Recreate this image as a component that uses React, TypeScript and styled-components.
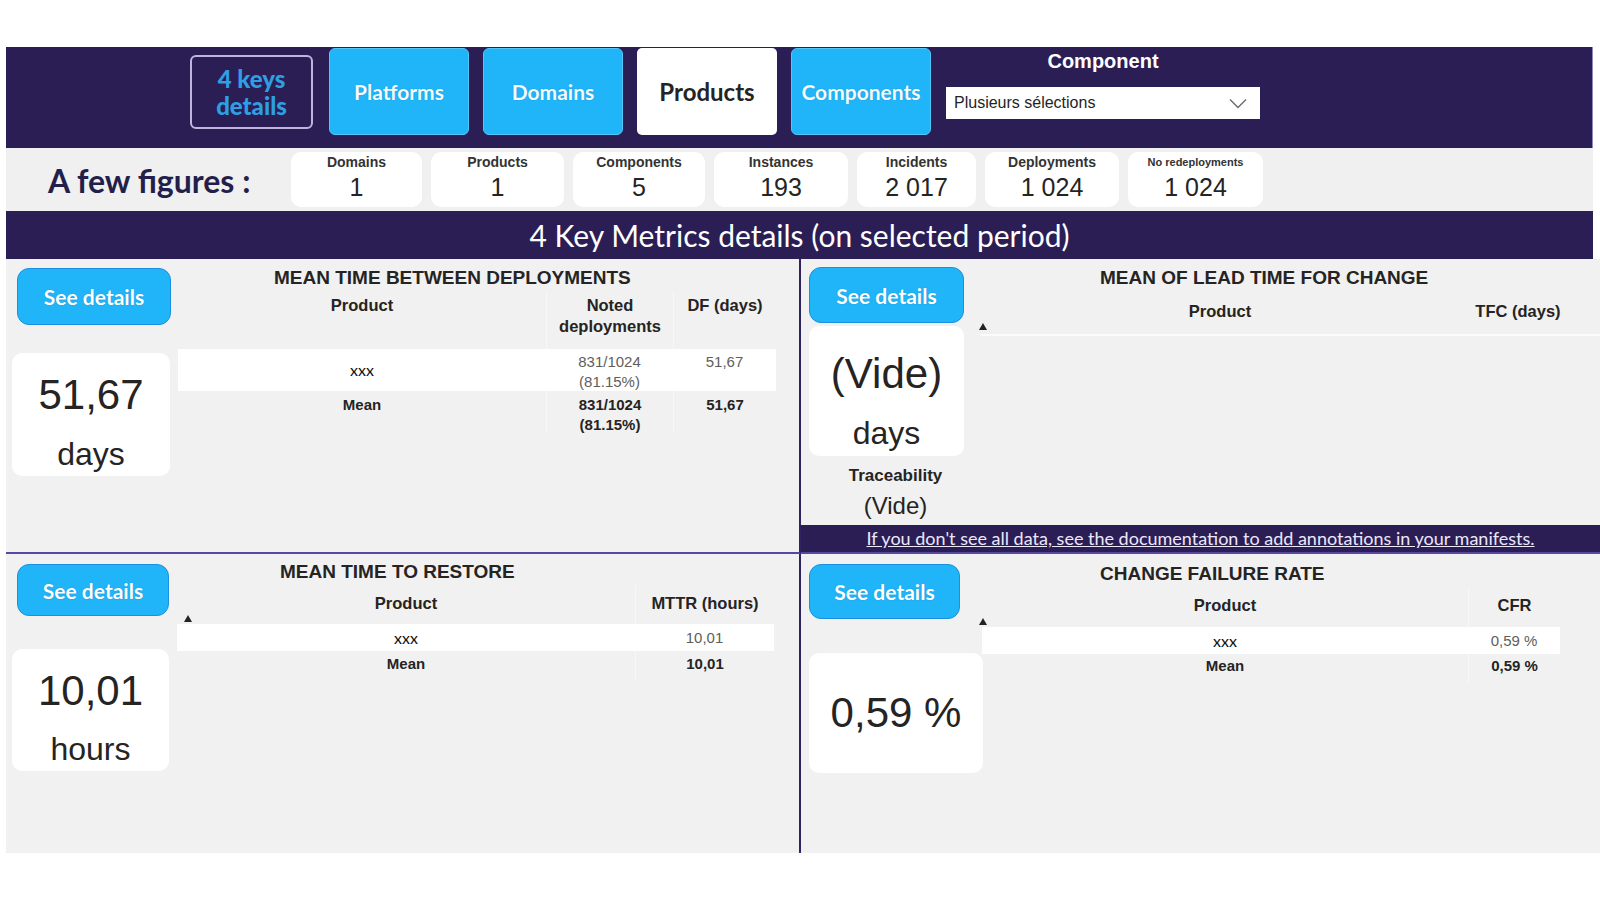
import React from "react";
import styled, { createGlobalStyle, css } from "styled-components";

const NARROW = `"Liberation Sans", Arial, sans-serif`;
const UI = `"Lato", "Liberation Sans", sans-serif`;
const INK = "#252423";
const NAVY = "#2b1e55";
const BLUE = "#1fb5f8";

const GlobalStyle = createGlobalStyle`
  html, body { margin: 0; padding: 0; background: #fff; }
  body { font-family: ${UI}; color: ${INK}; }
  * { box-sizing: border-box; }
`;

const Page = styled.div`
  width: 1600px;
  height: 900px;
  padding: 47px 0 0 6px;
  background: #fff;
  overflow: hidden;
`;

/* ---------- header ---------- */
const Header = styled.header`
  width: 1587px;
  height: 101px;
  background: ${NAVY};
  display: flex;
  align-items: flex-start;
  gap: 14px;
  padding: 1px 0 0 184px;
  border-right: 1px solid #8f88b8;
`;

type Variant = "outline" | "blue" | "active";
const NavButton = styled.button<{ $variant: Variant }>`
  flex: none;
  width: 140px;
  height: 87px;
  border-radius: 6px;
  font-family: ${UI};
  font-weight: 700;
  font-size: 21px;
  padding: 0;
  cursor: pointer;
  ${({ $variant }) =>
    $variant === "blue" &&
    css`
      background: ${BLUE};
      color: #f4fbff;
      border: 1px solid #52c6f8;
      text-shadow: 0 0 1px rgba(0, 60, 120, 0.4);
    `}
  ${({ $variant }) =>
    $variant === "active" &&
    css`
      background: #fff;
      color: ${INK};
      border: none;
      border-radius: 5px;
      font-size: 24px;
    `}
  ${({ $variant }) =>
    $variant === "outline" &&
    css`
      width: 123px;
      height: 74px;
      margin: 7px 2px 0 0;
      background: transparent;
      color: #2f9ee2;
      border: 2px solid #bdb6dc;
      line-height: 27px;
      font-size: 24px;
      font-weight: 900;
    `}
`;

const Slicer = styled.div`
  width: 314px;
  margin-left: 1px;
  display: flex;
  flex-direction: column;
`;

const SlicerLabel = styled.div`
  height: 26px;
  line-height: 26px;
  text-align: center;
  color: #fff;
  font-family: ${NARROW};
  font-weight: 700;
  font-size: 20px;
`;

const Dropdown = styled.div`
  margin-top: 13px;
  height: 32px;
  background: #fff;
  display: flex;
  align-items: center;
  justify-content: space-between;
  padding: 0 13px 0 8px;
  font-family: ${NARROW};
  font-size: 16px;
  color: ${INK};
`;

/* ---------- figures ---------- */
const FiguresRow = styled.div`
  width: 1587px;
  height: 63px;
  background: #f0f0f0;
  display: flex;
  align-items: center;
  padding-left: 42px;
`;

const FiguresLabel = styled.div`
  width: 243px;
  font-family: ${UI};
  font-weight: 700;
  font-size: 32px;
  color: #241f4a;
  padding-top: 2px;
`;

const FigureCards = styled.div`
  display: flex;
  gap: 9px;
`;

const FigureCard = styled.div<{ $w: number }>`
  width: ${(p) => p.$w}px;
  height: 55px;
  background: #fff;
  border-radius: 10px;
  display: flex;
  flex-direction: column;
  align-items: center;
  padding-top: 1px;
`;

const FigureName = styled.div<{ $small?: boolean }>`
  height: 19px;
  line-height: 19px;
  font-family: ${NARROW};
  font-weight: 700;
  font-size: ${(p) => (p.$small ? 11 : 14)}px;
  color: #333;
`;

const FigureValue = styled.div`
  height: 30px;
  line-height: 30px;
  font-family: ${NARROW};
  font-size: 25px;
  color: ${INK};
`;

/* ---------- title bar ---------- */
const TitleBar = styled.div`
  width: 1587px;
  height: 48px;
  line-height: 48px;
  background: ${NAVY};
  color: #fff;
  text-align: center;
  font-family: ${UI};
  font-size: 30px;
`;

/* ---------- board ---------- */
const Board = styled.div`
  width: 1594px;
  display: grid;
  grid-template-columns: 795px 799px;
  grid-template-rows: 295px 299px;
`;

const Quadrant = styled.section<{ $left?: boolean; $top?: boolean }>`
  background: #f1f1f1;
  display: flex;
  flex-direction: column;
  min-height: 0;
  overflow: hidden;
  ${(p) =>
    p.$left &&
    css`
      border-right: 2px solid #2f2462;
    `}
  ${(p) =>
    p.$top &&
    css`
      border-bottom: 2px solid #5747a3;
    `}
`;

const QuadBody = styled.div<{ $side: number }>`
  flex: 1;
  display: grid;
  grid-template-columns: ${(p) => p.$side}px auto;
  align-items: start;
  min-height: 0;
`;

const Side = styled.div`
  display: flex;
  flex-direction: column;
  align-items: flex-start;
`;

type Box = { $w: number; $h: number; $mt: number; $ml: number };

const SeeDetails = styled.button<Box>`
  width: ${(p) => p.$w}px;
  height: ${(p) => p.$h}px;
  margin: ${(p) => p.$mt}px 0 0 ${(p) => p.$ml}px;
  background: ${BLUE};
  border: 1px solid #1c8fe0;
  border-radius: 12px;
  color: #fff;
  font-family: ${UI};
  font-weight: 700;
  font-size: 21px;
  padding: 0;
  cursor: pointer;
  text-shadow: 0 0 1px rgba(0, 60, 120, 0.4);
`;

const KpiCard = styled.div<Box & { $pt?: number }>`
  width: ${(p) => p.$w}px;
  height: ${(p) => p.$h}px;
  margin: ${(p) => p.$mt}px 0 0 ${(p) => p.$ml}px;
  background: #fff;
  border-radius: 10px;
  display: flex;
  flex-direction: column;
  align-items: center;
  justify-content: ${(p) => (p.$pt === undefined ? "center" : "flex-start")};
  padding-top: ${(p) => p.$pt ?? 0}px;
`;

const KpiValue = styled.div`
  height: 56px;
  line-height: 56px;
  font-family: ${NARROW};
  font-size: 42px;
  color: ${INK};
  white-space: nowrap;
`;

const KpiUnit = styled.div<{ $mt: number }>`
  margin-top: ${(p) => p.$mt}px;
  height: 40px;
  line-height: 40px;
  font-family: ${NARROW};
  font-size: 32px;
  color: ${INK};
`;

const SideCaption = styled.div<{ $big?: boolean }>`
  width: 100%;
  text-align: center;
  padding-left: 10px;
  font-family: ${NARROW};
  font-weight: ${(p) => (p.$big ? 400 : 700)};
  font-size: ${(p) => (p.$big ? 24 : 17)}px;
  line-height: ${(p) => (p.$big ? 30 : 22)}px;
  margin-top: ${(p) => (p.$big ? 4 : 9)}px;
  color: ${INK};
`;

const Main = styled.div`
  display: flex;
  flex-direction: column;
`;

const PanelTitle = styled.h2<{ $pt: number; $pl: number }>`
  margin: 0;
  padding: ${(p) => p.$pt}px 0 0 ${(p) => p.$pl}px;
  height: ${(p) => p.$pt + 26}px;
  line-height: 26px;
  font-family: ${NARROW};
  font-weight: 700;
  font-size: 19px;
  color: ${INK};
  white-space: nowrap;
`;

const Table = styled.div<{ $cols: string; $rows: string; $rule?: boolean }>`
  position: relative;
  display: grid;
  grid-template-columns: ${(p) => p.$cols};
  grid-template-rows: ${(p) => p.$rows};
  ${(p) =>
    p.$rule &&
    css`
      border-bottom: 2px solid #fbfbfb;
    `}
`;

type CellKind = "head" | "data" | "mean";
const Cell = styled.div<{ $kind: CellKind; $pt?: number; $center?: boolean; $sep?: boolean; $plain?: boolean }>`
  text-align: center;
  padding-top: ${(p) => p.$pt ?? 0}px;
  line-height: 20px;
  white-space: pre-line;
  ${(p) =>
    p.$center &&
    css`
      display: flex;
      align-items: center;
      justify-content: center;
    `}
  ${(p) =>
    p.$sep &&
    css`
      border-left: 1px solid #f8f8f8;
    `}
  ${(p) =>
    p.$kind === "head" &&
    css`
      font-family: ${NARROW};
      font-weight: 700;
      font-size: 16.5px;
      line-height: 21px;
      color: ${INK};
    `}
  ${(p) =>
    p.$kind === "data" &&
    css`
      background: #fff;
      font-family: ${p.$plain ? UI : NARROW};
      font-size: ${p.$plain ? 16 : 15}px;
      color: ${p.$plain ? "#111" : "#605e5c"};
    `}
  ${(p) =>
    p.$kind === "mean" &&
    css`
      font-family: ${NARROW};
      font-weight: 700;
      font-size: 15px;
      color: ${INK};
    `}
`;

const SortMark = styled.span<{ $x: number; $y: number }>`
  position: absolute;
  left: ${(p) => p.$x - 4}px;
  top: ${(p) => p.$y - 3}px;
  width: 0;
  height: 0;
  border-left: 4px solid transparent;
  border-right: 4px solid transparent;
  border-bottom: 7px solid ${INK};
`;

const Banner = styled.div`
  height: 27px;
  flex: none;
  background: ${NAVY};
  text-align: center;
  line-height: 27px;
  font-family: ${UI};
  font-size: 18px;
`;

const BannerLink = styled.a`
  color: #ece8fa;
  text-decoration: underline;
`;

const Chevron = () => (
  <svg width="18" height="11" viewBox="0 0 18 11" fill="none">
    <path d="M1 1.5 L9 9.5 L17 1.5" stroke="#6b6b6b" strokeWidth="1.4" />
  </svg>
);

const figures = [
  { name: "Domains", value: "1", w: 131 },
  { name: "Products", value: "1", w: 133 },
  { name: "Components", value: "5", w: 132 },
  { name: "Instances", value: "193", w: 134 },
  { name: "Incidents", value: "2 017", w: 119 },
  { name: "Deployments", value: "1 024", w: 134 },
  { name: "No redeployments", value: "1 024", w: 135, small: true },
];

export default function App() {
  return (
    <>
      <GlobalStyle />
      <Page>
        <Header>
          <NavButton $variant="outline">
            4 keys
            <br />
            details
          </NavButton>
          <NavButton $variant="blue">Platforms</NavButton>
          <NavButton $variant="blue">Domains</NavButton>
          <NavButton $variant="active">Products</NavButton>
          <NavButton $variant="blue">Components</NavButton>
          <Slicer>
            <SlicerLabel>Component</SlicerLabel>
            <Dropdown>
              <span>Plusieurs sélections</span>
              <Chevron />
            </Dropdown>
          </Slicer>
        </Header>

        <FiguresRow>
          <FiguresLabel>A few figures :</FiguresLabel>
          <FigureCards>
            {figures.map((f) => (
              <FigureCard key={f.name} $w={f.w}>
                <FigureName $small={f.small}>{f.name}</FigureName>
                <FigureValue>{f.value}</FigureValue>
              </FigureCard>
            ))}
          </FigureCards>
        </FiguresRow>

        <TitleBar>4 Key Metrics details (on selected period)</TitleBar>

        <Board>
          {/* Mean time between deployments */}
          <Quadrant $left $top>
            <QuadBody $side={172}>
              <Side>
                <SeeDetails $w={154} $h={57} $mt={9} $ml={11}>See details</SeeDetails>
                <KpiCard $w={158} $h={123} $mt={28} $ml={6} $pt={14}>
                  <KpiValue>51,67</KpiValue>
                  <KpiUnit $mt={11}>days</KpiUnit>
                </KpiCard>
              </Side>
              <Main>
                <PanelTitle $pt={6} $pl={96}>MEAN TIME BETWEEN DEPLOYMENTS</PanelTitle>
                <Table $cols="368px 127px 103px" $rows="58px 42px 42px">
                  <Cell $kind="head" $pt={4}>Product</Cell>
                  <Cell $kind="head" $pt={4} $sep>{"Noted\ndeployments"}</Cell>
                  <Cell $kind="head" $pt={4} $sep>DF (days)</Cell>
                  <Cell $kind="data" $center $plain>xxx</Cell>
                  <Cell $kind="data" $pt={3}>{"831/1024\n(81.15%)"}</Cell>
                  <Cell $kind="data" $pt={3}>51,67</Cell>
                  <Cell $kind="mean" $pt={4}>Mean</Cell>
                  <Cell $kind="mean" $pt={4} $sep>{"831/1024\n(81.15%)"}</Cell>
                  <Cell $kind="mean" $pt={4} $sep>51,67</Cell>
                </Table>
              </Main>
            </QuadBody>
          </Quadrant>

          {/* Mean of lead time for change */}
          <Quadrant $top>
            <QuadBody $side={179}>
              <Side>
                <SeeDetails $w={155} $h={56} $mt={8} $ml={8}>See details</SeeDetails>
                <KpiCard $w={155} $h={130} $mt={3} $ml={8} $pt={20}>
                  <KpiValue>(Vide)</KpiValue>
                  <KpiUnit $mt={11}>days</KpiUnit>
                </KpiCard>
                <SideCaption>Traceability</SideCaption>
                <SideCaption $big>(Vide)</SideCaption>
              </Side>
              <Main>
                <PanelTitle $pt={6} $pl={120}>MEAN OF LEAD TIME FOR CHANGE</PanelTitle>
                <Table $cols="480px 116px" $rows="43px" $rule>
                  <Cell $kind="head" $pt={10}>Product</Cell>
                  <Cell $kind="head" $pt={10}>TFC (days)</Cell>
                  <SortMark $x={3} $y={35} />
                </Table>
              </Main>
            </QuadBody>
            <Banner>
              <BannerLink href="#">
                If you don't see all data, see the documentation to add annotations in your manifests.
              </BannerLink>
            </Banner>
          </Quadrant>

          {/* Mean time to restore */}
          <Quadrant $left>
            <QuadBody $side={171}>
              <Side>
                <SeeDetails $w={152} $h={52} $mt={10} $ml={11}>See details</SeeDetails>
                <KpiCard $w={157} $h={122} $mt={33} $ml={6} $pt={14}>
                  <KpiValue>10,01</KpiValue>
                  <KpiUnit $mt={10}>hours</KpiUnit>
                </KpiCard>
              </Side>
              <Main>
                <PanelTitle $pt={5} $pl={103}>MEAN TIME TO RESTORE</PanelTitle>
                <Table $cols="458px 139px" $rows="39px 27px 30px">
                  <Cell $kind="head" $pt={8}>Product</Cell>
                  <Cell $kind="head" $pt={8} $sep>MTTR (hours)</Cell>
                  <Cell $kind="data" $center $plain>xxx</Cell>
                  <Cell $kind="data" $center>10,01</Cell>
                  <Cell $kind="mean" $pt={3}>Mean</Cell>
                  <Cell $kind="mean" $pt={3} $sep>10,01</Cell>
                  <SortMark $x={11} $y={33} />
                </Table>
              </Main>
            </QuadBody>
          </Quadrant>

          {/* Change failure rate */}
          <Quadrant>
            <QuadBody $side={181}>
              <Side>
                <SeeDetails $w={151} $h={55} $mt={10} $ml={8}>See details</SeeDetails>
                <KpiCard $w={174} $h={120} $mt={34} $ml={8}>
                  <KpiValue>0,59 %</KpiValue>
                </KpiCard>
              </Side>
              <Main>
                <PanelTitle $pt={7} $pl={118}>CHANGE FAILURE RATE</PanelTitle>
                <Table $cols="486px 92px" $rows="40px 27px 30px">
                  <Cell $kind="head" $pt={8}>Product</Cell>
                  <Cell $kind="head" $pt={8} $sep>CFR</Cell>
                  <Cell $kind="data" $center $plain>xxx</Cell>
                  <Cell $kind="data" $center>0,59 %</Cell>
                  <Cell $kind="mean" $pt={2}>Mean</Cell>
                  <Cell $kind="mean" $pt={2} $sep>0,59 %</Cell>
                  <SortMark $x={1} $y={34} />
                </Table>
              </Main>
            </QuadBody>
          </Quadrant>
        </Board>
      </Page>
    </>
  );
}
